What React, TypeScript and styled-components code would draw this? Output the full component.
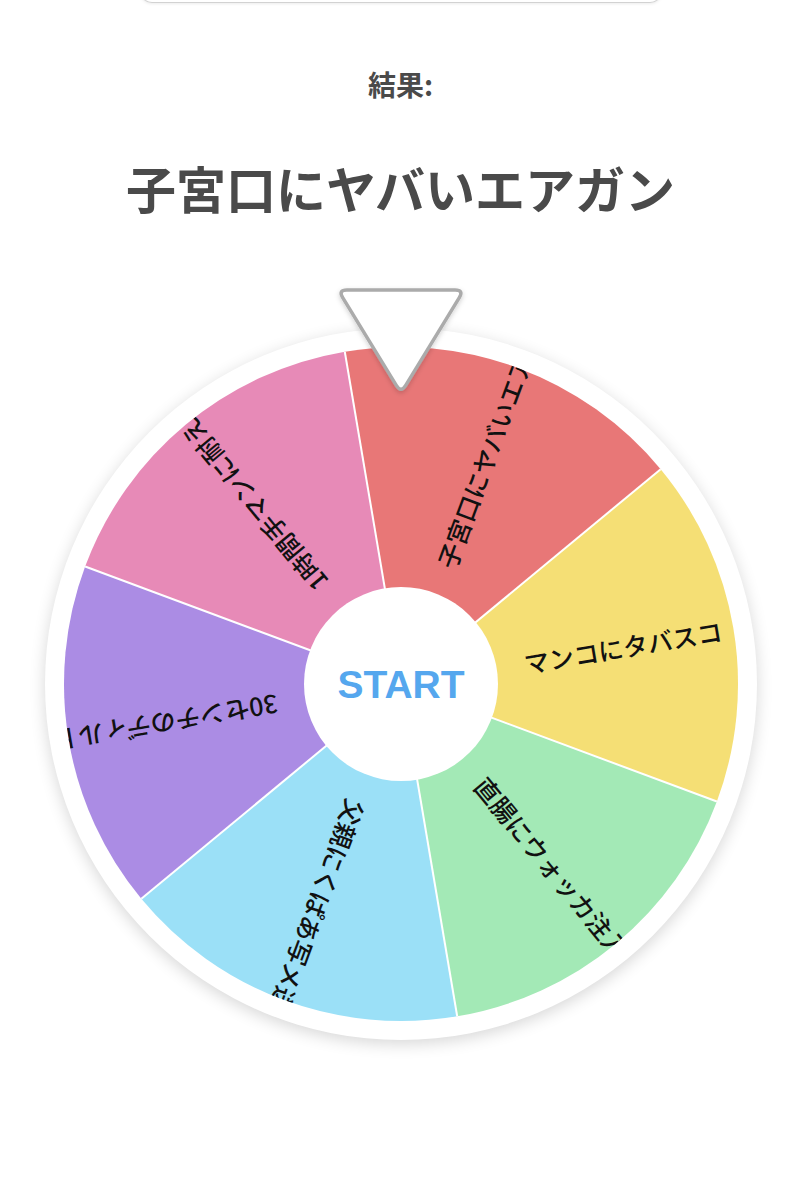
import styled, { createGlobalStyle } from 'styled-components'

const GlobalStyle = createGlobalStyle`
  html, body {
    margin: 0;
    padding: 0;
    background: #ffffff;
  }
  body {
    font-family: "Noto Sans CJK JP", "Noto Sans", sans-serif;
  }
`

const segments = [
  { label: '子宮口にヤバいエアガン', color: '#e87777' },
  { label: 'マンコにタバスコ', color: '#f5df75' },
  { label: '直腸にウォッカ注入', color: '#a3e9b6' },
  { label: '父親にくぱあ写メ送信', color: '#9be0f7' },
  { label: '30センチのディルド', color: '#ab8ce4' },
  { label: '1時間手マンに耐える', color: '#e78ab7' },
]

// wheel geometry
const SIZE = 712
const C = SIZE / 2
const R = 337
const INNER = 97
const OFFSET = -9.6
const LABEL_START = 125

const point = (deg: number, r: number) => {
  const rad = (deg * Math.PI) / 180
  return [C + r * Math.sin(rad), C - r * Math.cos(rad)]
}

const wedgePath = (from: number, to: number) => {
  const [x0, y0] = point(from, R)
  const [x1, y1] = point(to, R)
  return `M ${C} ${C} L ${x0} ${y0} A ${R} ${R} 0 0 1 ${x1} ${y1} Z`
}

// triangle with softened corners
const roundedTriangle = (pts: number[][], r: number) => {
  const parts: string[] = []
  pts.forEach((v, i) => {
    const p = pts[(i + pts.length - 1) % pts.length]
    const n = pts[(i + 1) % pts.length]
    const toward = (t: number[]) => {
      const dx = t[0] - v[0]
      const dy = t[1] - v[1]
      const len = Math.hypot(dx, dy)
      return [v[0] + (dx / len) * r, v[1] + (dy / len) * r]
    }
    const a = toward(p)
    const b = toward(n)
    parts.push(`${i === 0 ? 'M' : 'L'} ${a[0]} ${a[1]} Q ${v[0]} ${v[1]} ${b[0]} ${b[1]}`)
  })
  return parts.join(' ') + ' Z'
}

export default function App() {
  const step = 360 / segments.length

  return (
    <>
      <GlobalStyle />
      <Page>
        <TopBar />
        <ResultLabel>結果:</ResultLabel>
        <ResultText>子宮口にヤバいエアガン</ResultText>

        <WheelArea>
          <Wheel>
            <svg width={SIZE} height={SIZE} viewBox={`0 0 ${SIZE} ${SIZE}`}>
              <defs>
                <clipPath id="wheel-clip">
                  <circle cx={C} cy={C} r={R} />
                </clipPath>
              </defs>
              {segments.map((s, i) => (
                <path
                  key={s.label}
                  d={wedgePath(OFFSET + i * step, OFFSET + (i + 1) * step)}
                  fill={s.color}
                />
              ))}
              {segments.map((s, i) => {
                const [x, y] = point(OFFSET + i * step, R)
                return (
                  <line key={i} x1={C} y1={C} x2={x} y2={y} stroke="#ffffff" strokeWidth={2} />
                )
              })}
              <g clipPath="url(#wheel-clip)">
                {segments.map((s, i) => {
                  const mid = OFFSET + i * step + step / 2
                  return (
                    <SliceLabel
                      key={s.label}
                      x={C + LABEL_START}
                      y={C}
                      dominantBaseline="central"
                      transform={`rotate(${mid - 90} ${C} ${C})`}
                    >
                      {s.label}
                    </SliceLabel>
                  )
                })}
              </g>
              <circle cx={C} cy={C} r={INNER} fill="#ffffff" />
              <StartText x={C} y={C} textAnchor="middle" dominantBaseline="central">
                START
              </StartText>
            </svg>
          </Wheel>

          <Pointer width={140} height={116} viewBox="0 0 140 116">
            <defs>
              <filter id="pointer-shadow" x="-20%" y="-20%" width="140%" height="140%">
                <feDropShadow dx="0" dy="2" stdDeviation="2.5" floodColor="#000000" floodOpacity="0.18" />
              </filter>
            </defs>
            <path
              d={roundedTriangle(
                [
                  [7, 6],
                  [133, 6],
                  [70, 109],
                ],
                9,
              )}
              fill="#ffffff"
              stroke="#ababab"
              strokeWidth={3.5}
              filter="url(#pointer-shadow)"
            />
          </Pointer>
        </WheelArea>
      </Page>
    </>
  )
}

const Page = styled.div`
  display: flex;
  flex-direction: column;
  align-items: center;
  min-height: 1200px;
  overflow: hidden;
`

const TopBar = styled.div`
  width: 522px;
  height: 24px;
  margin-top: -21px;
  box-sizing: border-box;
  border: 1.5px solid #d2d2d2;
  border-top: none;
  border-radius: 0 0 12px 12px;
  background: #ffffff;
  box-shadow: 0 1px 3px rgba(0, 0, 0, 0.08);
`

const ResultLabel = styled.div`
  margin-top: 66px;
  font-size: 28px;
  line-height: 30px;
  font-weight: 700;
  color: #4a4a4a;
`

const ResultText = styled.h1`
  margin: 61px 0 0;
  font-size: 50px;
  line-height: 54px;
  font-weight: 700;
  color: #4a4a4a;
`

const WheelArea = styled.div`
  position: relative;
  width: ${SIZE}px;
  height: ${SIZE}px;
  margin-top: 114px;
`

const Wheel = styled.div`
  width: ${SIZE}px;
  height: ${SIZE}px;
  border-radius: 50%;
  background: #ffffff;
  box-shadow: 0 4px 16px rgba(0, 0, 0, 0.16);

  svg {
    display: block;
  }
`

const SliceLabel = styled.text`
  font-family: "Noto Sans CJK JP", sans-serif;
  font-size: 25px;
  font-weight: 500;
  fill: #111111;
`

const StartText = styled.text`
  font-family: "Liberation Sans", Arial, sans-serif;
  font-size: 39px;
  font-weight: 700;
  fill: #55a7ee;
`

const Pointer = styled.svg`
  position: absolute;
  top: -44px;
  left: 50%;
  transform: translateX(-50%);
  overflow: visible;
`
